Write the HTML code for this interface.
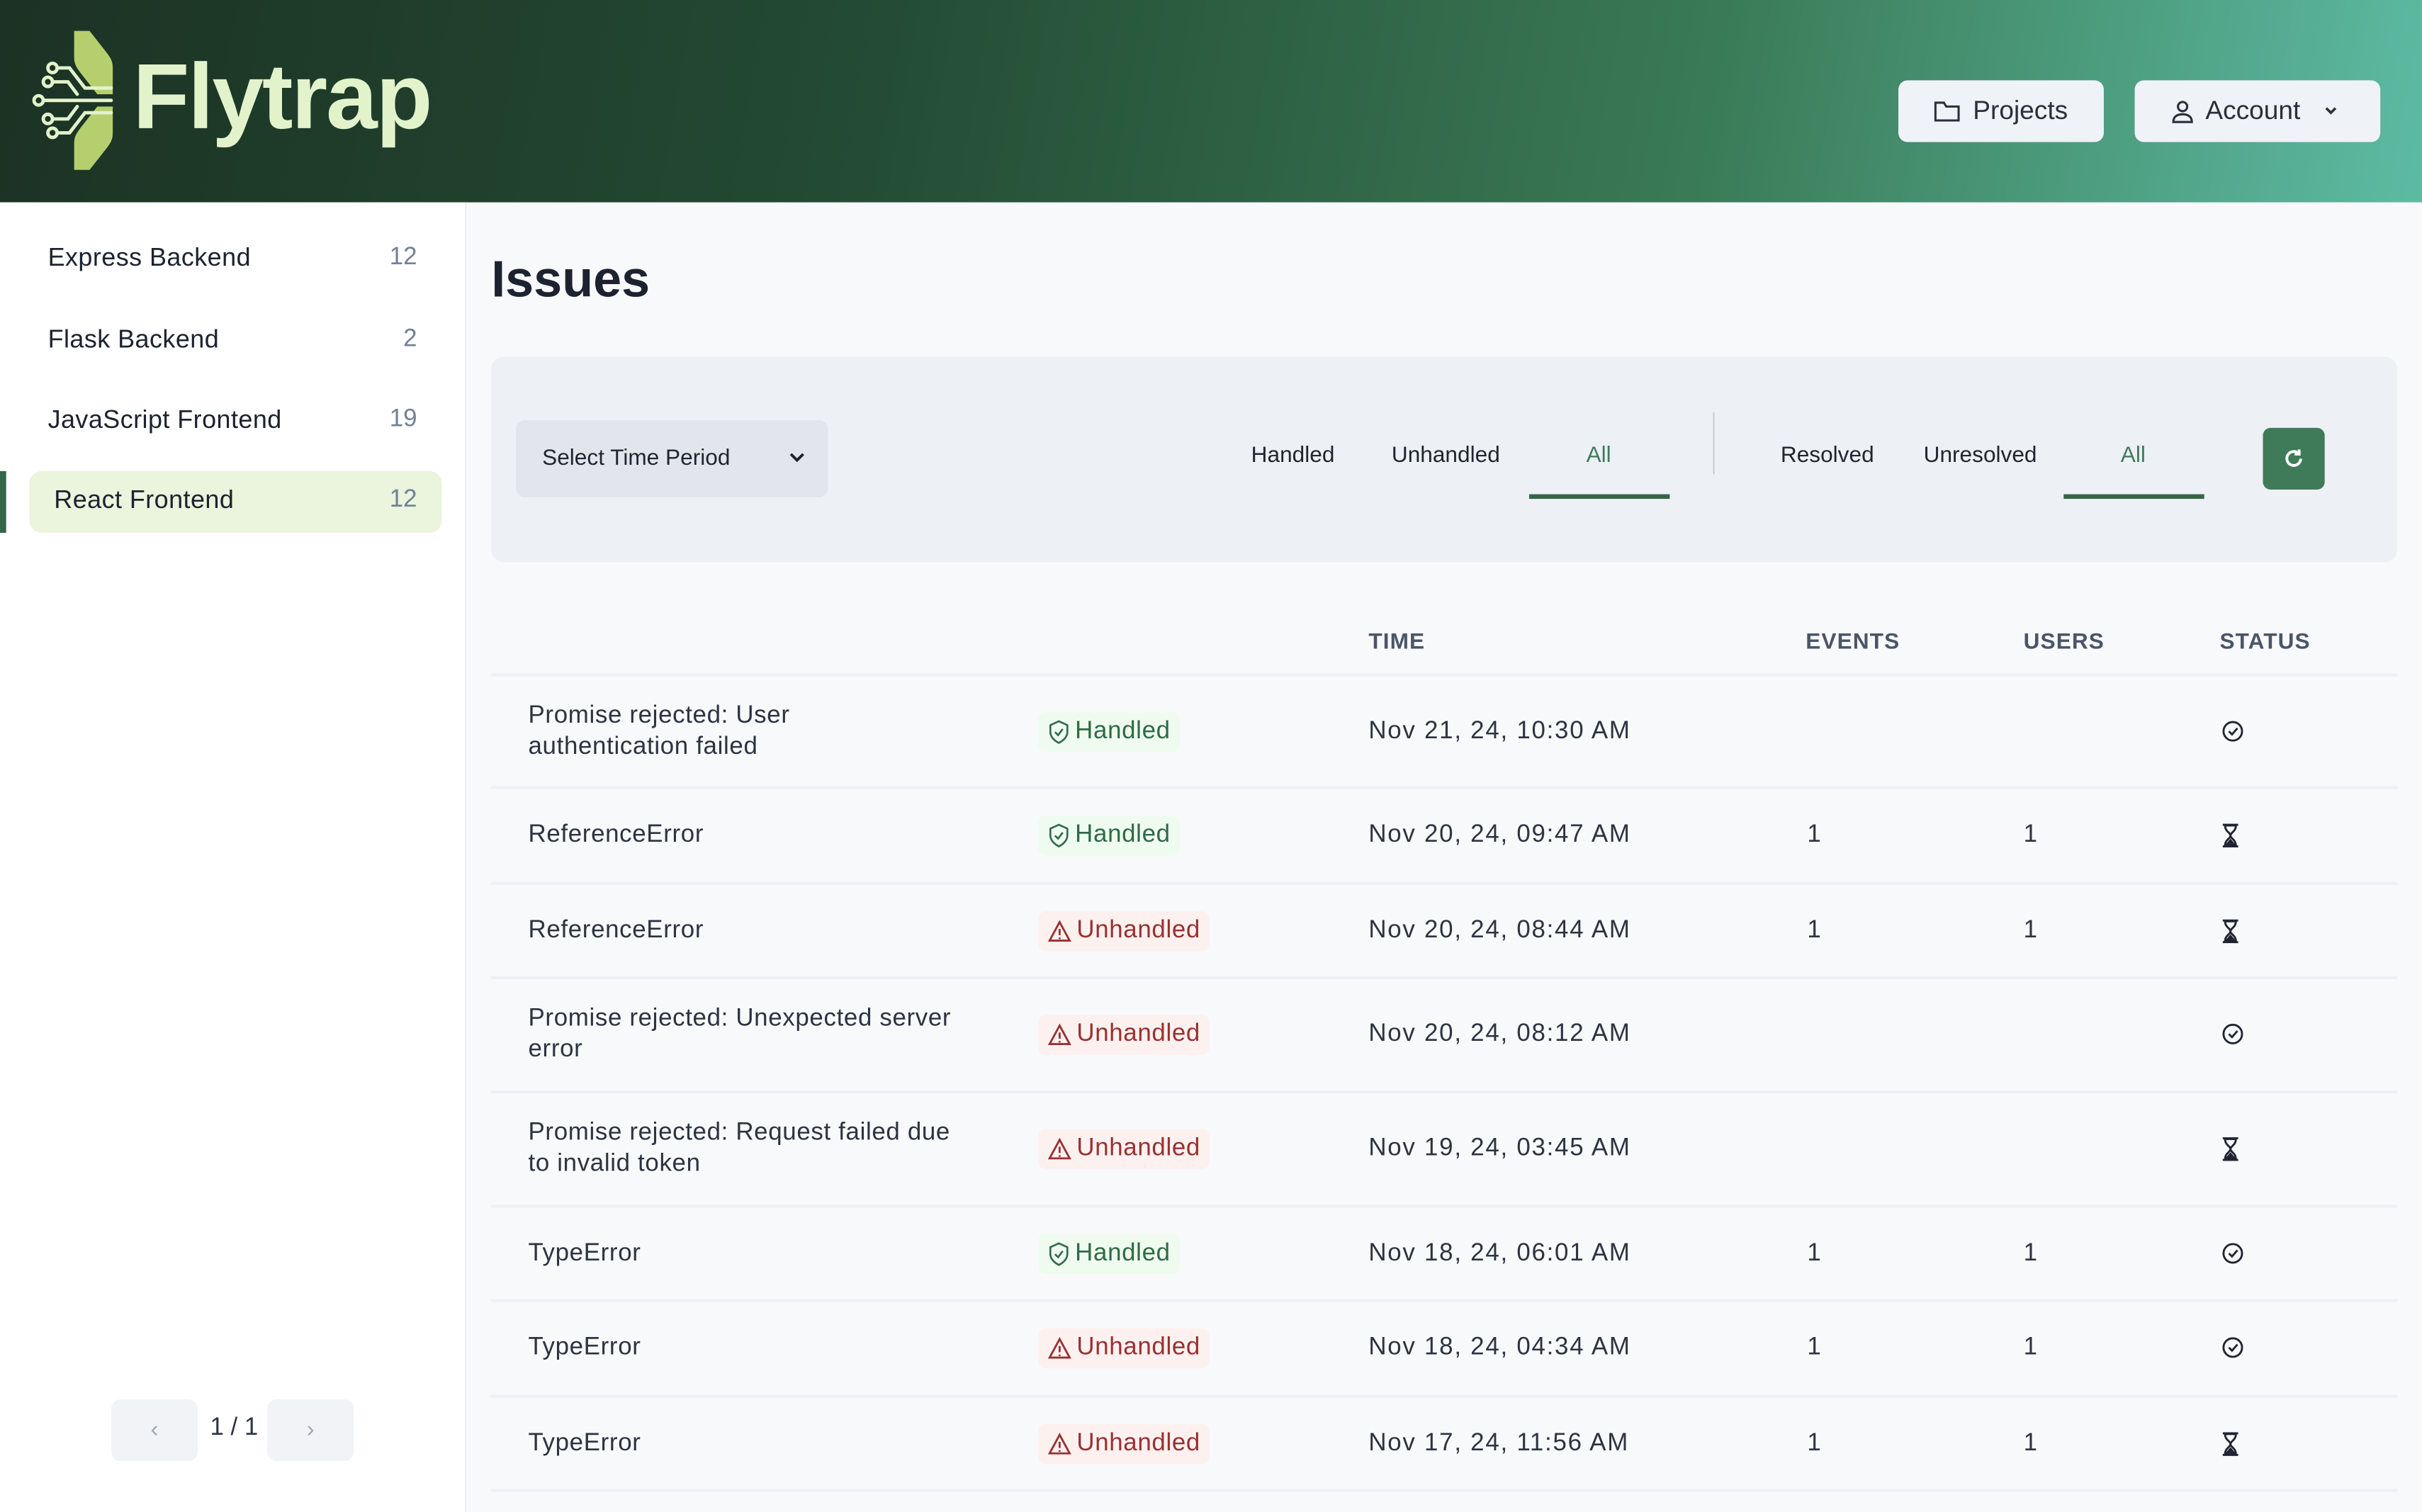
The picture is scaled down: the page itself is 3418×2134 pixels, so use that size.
<!DOCTYPE html>
<html><head><meta charset="utf-8"><style>
*{box-sizing:border-box;margin:0;padding:0}
html,body{width:3418px;height:2133px;overflow:hidden;background:#f8f9fb}
#s{position:absolute;left:0;top:0;width:1568px;height:979px;transform:scale(2.17985);transform-origin:0 0;font-family:"Liberation Sans",sans-serif;color:#1f2430;background:#f8f9fb}
.a{position:absolute}
.hdr{left:0;top:0;width:1568px;height:131px;background:linear-gradient(100deg,#1c3224 0%,#234a33 35%,#3a7a56 70%,#5dbba3 100%)}
.btn{background:#eff2f6;border-radius:6px;height:40px;top:52px;display:flex;align-items:center;justify-content:center;font-size:17px;color:#2a2f3a;gap:8px}
.side{left:0;top:131px;width:302px;height:848px;background:#fff;border-right:1px solid #eceef2}
.si{left:31px;font-size:16.5px;color:#1c2230;letter-spacing:.2px}
.cnt{right:32px;font-size:16px;color:#718096;text-align:right}
.panel{left:318px;top:231px;width:1234px;height:133px;background:#edf0f4;border-radius:8px}
.tab{font-size:14.5px;color:#1f2430;top:287px;transform:translateX(-50%)}
.th{top:408px;font-size:14.5px;font-weight:bold;color:#4a5568;letter-spacing:.5px}
.line{left:318px;width:1234px;height:2px;background:#eef0f4}
.t{font-size:16px;color:#2d3340;line-height:20px;letter-spacing:.3px}
.bd{font-size:16px;height:26px;border-radius:5px;display:flex;align-items:center;padding:0 6px;gap:3px;left:672px;letter-spacing:.3px}
.h{background:#f0fbf0;color:#2f6a45}
.u{background:#fdf1f0;color:#9a3030}
</style></head><body><div id="s">
<div class="a hdr"></div>
<svg class="a" style="left:20px;top:18px" width="62" height="94" viewBox="0 0 62 94">
<path d="M28 2h10l11 14c3 4 4 6 4 10v17h-10l-11-14c-3-4-4-6-4-10z" fill="#b5cf6f"/>
<path d="M28 92h10l11-14c3-4 4-6 4-10v-17h-10l-11 14c-3 4-4 6-4 10z" fill="#b5cf6f"/>
<g stroke="#e2f3cc" stroke-width="2.2" fill="none" stroke-linecap="round">
<circle cx="14" cy="26" r="3"/><circle cx="11" cy="35" r="3"/><circle cx="5" cy="47" r="3"/><circle cx="11" cy="59" r="3"/><circle cx="14" cy="68" r="3"/>
<path d="M17 26h8l10 13h17M14 35h10l6 8M8 47h44M14 59h10l6-8M17 68h8l10-13h17"/></g></svg>
<div class="a" style="left:86px;top:28px;font-size:60px;font-weight:bold;color:#e2f3cc;letter-spacing:-1px">Flytrap</div>
<div class="a btn" style="left:1229px;width:133px"><svg width="17" height="15" viewBox="0 0 17 15" fill="none" stroke="#2a2f3a" stroke-width="1.4"><path d="M1 3V13h15V4H8L6.5 1.5H1z"/></svg>Projects</div>
<div class="a btn" style="left:1382px;width:159px"><svg width="14" height="15" viewBox="0 0 14 15" fill="none" stroke="#2a2f3a" stroke-width="1.4"><circle cx="7" cy="4" r="3"/><path d="M1 14c0-4 3-5 6-5s6 1 6 5z"/></svg>Account<svg width="16" height="10" viewBox="0 0 16 10" fill="none" stroke="#2a2f3a" stroke-width="1.6" style="margin-left:4px"><path d="M5 3l3 3 3-3"/></svg></div>
<div class="a side"></div>
<div class="a si" style="top:158px">Express Backend</div><div class="a cnt" style="top:158px;left:0;width:270px">12</div>
<div class="a si" style="top:211px">Flask Backend</div><div class="a cnt" style="top:211px;left:0;width:270px">2</div>
<div class="a si" style="top:263px">JavaScript Frontend</div><div class="a cnt" style="top:263px;left:0;width:270px">19</div>
<div class="a" style="left:0;top:305px;width:4px;height:40px;background:#336646"></div>
<div class="a" style="left:19px;top:305px;width:267px;height:40px;background:#ebf4dc;border-radius:8px"></div>
<div class="a si" style="top:315px;left:35px">React Frontend</div><div class="a cnt" style="top:315px;left:0;width:270px">12</div>
<div class="a" style="left:72px;top:906px;width:56px;height:40px;background:#f1f3f6;border-radius:6px;text-align:center;line-height:40px;color:#a0a8b4;font-size:15px">‹</div>
<div class="a" style="left:136px;top:916px;font-size:16px;color:#2d3340">1 / 1</div>
<div class="a" style="left:173px;top:906px;width:56px;height:40px;background:#f1f3f6;border-radius:6px;text-align:center;line-height:40px;color:#a0a8b4;font-size:15px">›</div>
<div class="a" style="left:318px;top:162px;font-size:33px;font-weight:bold;color:#1c2230">Issues</div>
<div class="a panel"></div>
<div class="a" style="left:334px;top:272px;width:202px;height:50px;background:#e2e6ec;border-radius:6px;font-size:14.5px;line-height:50px;padding-left:17px;color:#1f2430">Select Time Period<svg style="position:absolute;right:14px;top:20px" width="12" height="9" viewBox="0 0 12 9" fill="none" stroke="#1f2430" stroke-width="1.8"><path d="M2 2l4 4 4-4"/></svg></div>
<div class="a tab" style="left:837px">Handled</div><div class="a tab" style="left:936px">Unhandled</div><div class="a tab" style="left:1035px;color:#3d7a5a">All</div>
<div class="a" style="left:990px;top:320px;width:91px;height:3px;background:#336646"></div>
<div class="a" style="left:1109px;top:267px;width:1px;height:40px;background:#c9ced6"></div>
<div class="a tab" style="left:1183px">Resolved</div><div class="a tab" style="left:1282px">Unresolved</div><div class="a tab" style="left:1381px;color:#3d7a5a">All</div>
<div class="a" style="left:1336px;top:320px;width:91px;height:3px;background:#336646"></div>
<div class="a" style="left:1465px;top:277px;width:40px;height:40px;background:#3f7b59;border-radius:5px"><svg style="margin:13px" width="14" height="14" viewBox="0 0 14 14" fill="none" stroke="#fff" stroke-width="1.8"><path d="M11.5 7A4.5 4.5 0 1 1 10 3.5M10.5 1v3h-3"/></svg></div>
<div class="a th" style="left:886px">TIME</div><div class="a th" style="left:1169px">EVENTS</div><div class="a th" style="left:1310px">USERS</div><div class="a th" style="left:1437px">STATUS</div>
<div class="a line" style="top:436px"></div>
<div id="rows"></div>
<script>
var sh='<svg width="15" height="16" viewBox="0 0 15 16" fill="none" stroke="currentColor" stroke-width="1.2"><path d="M7.5 1L13 3.5V8c0 3-2.5 5.5-5.5 7C4.5 13.5 2 11 2 8V3.5z"/><path d="M5 8l2 2 3-4"/></svg>';
var wr='<svg width="16" height="16" viewBox="0 0 16 16" fill="none" stroke="currentColor" stroke-width="1.3"><path d="M8 2L14.5 14h-13z"/><path d="M8 6.5v4M8 12v1"/></svg>';
var ck='<svg width="15" height="15" viewBox="0 0 15 15" fill="none" stroke="#1f2430" stroke-width="1.3"><circle cx="7.5" cy="7.5" r="6"/><path d="M5 7.5l2 2 3.5-4"/></svg>';
var hg='<svg width="12" height="16" viewBox="0 0 12 16" fill="#1f2430" stroke="#1f2430" stroke-width="1.3"><path d="M1 1h10M1 15h10" fill="none"/><path d="M2.5 1.5c0 4 3.5 4.5 3.5 6.5s-3.5 2.5-3.5 6.5h7c0-4-3.5-4.5-3.5-6.5s3.5-2.5 3.5-6.5z" fill="none"/><path d="M3.5 14l2.5-3 2.5 3z"/></svg>';
var R=[[437,510,'Promise rejected: User<br>authentication failed',1,'Nov 21, 24, 10:30 AM','','',ck],
[510,572,'ReferenceError',1,'Nov 20, 24, 09:47 AM','1','1',hg],
[572,633,'ReferenceError',0,'Nov 20, 24, 08:44 AM','1','1',hg],
[633,707,'Promise rejected: Unexpected server<br>error',0,'Nov 20, 24, 08:12 AM','','',ck],
[707,781,'Promise rejected: Request failed due<br>to invalid token',0,'Nov 19, 24, 03:45 AM','','',hg],
[781,842,'TypeError',1,'Nov 18, 24, 06:01 AM','1','1',ck],
[842,904,'TypeError',0,'Nov 18, 24, 04:34 AM','1','1',ck],
[904,965,'TypeError',0,'Nov 17, 24, 11:56 AM','1','1',hg]];
var h='';R.forEach(function(r){var c=(r[0]+r[1])/2;var two=r[2].indexOf('<br>')>0;
h+='<div class="a t" style="left:342px;top:'+(c-(two?20:10))+'px">'+r[2]+'</div>';
h+='<div class="a bd '+(r[3]?'h':'u')+'" style="top:'+(c-13)+'px">'+(r[3]?sh:wr)+(r[3]?'Handled':'Unhandled')+'</div>';
h+='<div class="a t" style="left:886px;top:'+(c-10)+'px;letter-spacing:.8px">'+r[4]+'</div>';
h+='<div class="a t" style="left:1170px;top:'+(c-10)+'px">'+r[5]+'</div>';
h+='<div class="a t" style="left:1310px;top:'+(c-10)+'px">'+r[6]+'</div>';
h+='<div class="a" style="left:1438px;top:'+(c-8)+'px">'+r[7]+'</div>';
h+='<div class="a line" style="top:'+(r[1]-1)+'px"></div>';});
document.getElementById('rows').innerHTML=h;
</script>
</div></body></html>
